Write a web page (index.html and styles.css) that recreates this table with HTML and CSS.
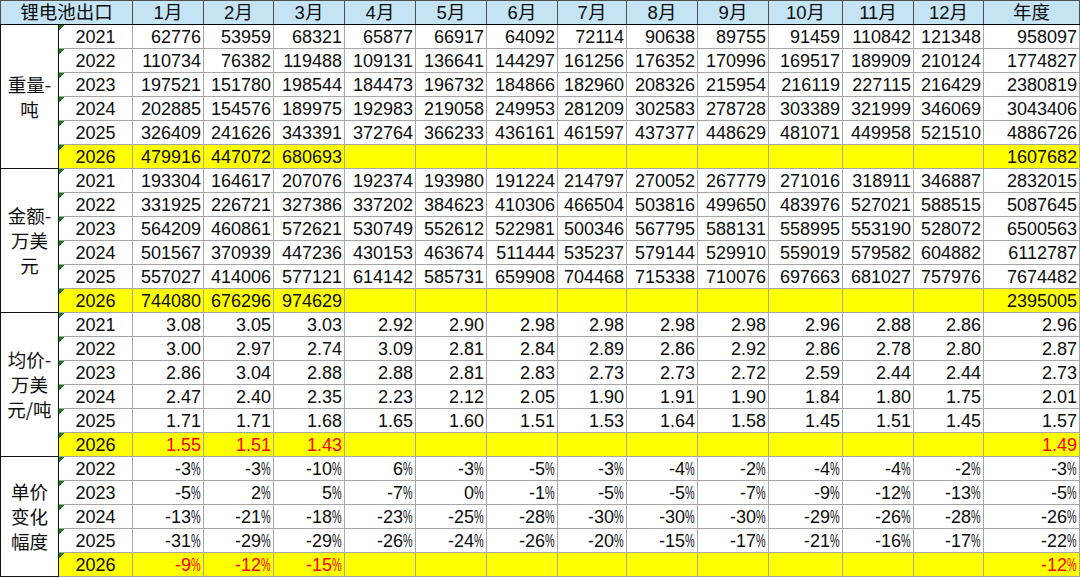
FILE: index.html
```html
<!DOCTYPE html>
<html lang="zh">
<head>
<meta charset="utf-8">
<link rel="stylesheet" href="styles.css">
</head>
<body>
<table class="sheet">
<colgroup>
<col class="c0"><col class="c1"><col class="m71"><col class="m70"><col class="m71"><col class="m71"><col class="m71"><col class="m71"><col class="m69"><col class="m71"><col class="m71"><col class="m74"><col class="m71"><col class="m70"><col class="cy">
</colgroup>
<thead>
<tr><th colspan="2">锂电池出口</th><th>1月</th><th>2月</th><th>3月</th><th>4月</th><th>5月</th><th>6月</th><th>7月</th><th>8月</th><th>9月</th><th>10月</th><th>11月</th><th>12月</th><th>年度</th></tr>
</thead>
<tbody>
<tr class="gs"><td class="cat" rowspan="6">重量-<br>吨</td><td class="yr">2021</td><td>62776</td><td>53959</td><td>68321</td><td>65877</td><td>66917</td><td>64092</td><td>72114</td><td>90638</td><td>89755</td><td>91459</td><td>110842</td><td>121348</td><td>958097</td></tr>
<tr><td class="yr">2022</td><td>110734</td><td>76382</td><td>119488</td><td>109131</td><td>136641</td><td>144297</td><td>161256</td><td>176352</td><td>170996</td><td>169517</td><td>189909</td><td>210124</td><td>1774827</td></tr>
<tr><td class="yr">2023</td><td>197521</td><td>151780</td><td>198544</td><td>184473</td><td>196732</td><td>184866</td><td>182960</td><td>208326</td><td>215954</td><td>216119</td><td>227115</td><td>216429</td><td>2380819</td></tr>
<tr><td class="yr">2024</td><td>202885</td><td>154576</td><td>189975</td><td>192983</td><td>219058</td><td>249953</td><td>281209</td><td>302583</td><td>278728</td><td>303389</td><td>321999</td><td>346069</td><td>3043406</td></tr>
<tr><td class="yr">2025</td><td>326409</td><td>241626</td><td>343391</td><td>372764</td><td>366233</td><td>436161</td><td>461597</td><td>437377</td><td>448629</td><td>481071</td><td>449958</td><td>521510</td><td>4886726</td></tr>
<tr class="hl"><td class="yr">2026</td><td>479916</td><td>447072</td><td>680693</td><td></td><td></td><td></td><td></td><td></td><td></td><td></td><td></td><td></td><td>1607682</td></tr>

<tr class="gs"><td class="cat" rowspan="6">金额-<br>万美<br>元</td><td class="yr">2021</td><td>193304</td><td>164617</td><td>207076</td><td>192374</td><td>193980</td><td>191224</td><td>214797</td><td>270052</td><td>267779</td><td>271016</td><td>318911</td><td>346887</td><td>2832015</td></tr>
<tr><td class="yr">2022</td><td>331925</td><td>226721</td><td>327386</td><td>337202</td><td>384623</td><td>410306</td><td>466504</td><td>503816</td><td>499650</td><td>483976</td><td>527021</td><td>588515</td><td>5087645</td></tr>
<tr><td class="yr">2023</td><td>564209</td><td>460861</td><td>572621</td><td>530749</td><td>552612</td><td>522981</td><td>500346</td><td>567795</td><td>588131</td><td>558995</td><td>553190</td><td>528072</td><td>6500563</td></tr>
<tr><td class="yr">2024</td><td>501567</td><td>370939</td><td>447236</td><td>430153</td><td>463674</td><td>511444</td><td>535237</td><td>579144</td><td>529910</td><td>559019</td><td>579582</td><td>604882</td><td>6112787</td></tr>
<tr><td class="yr">2025</td><td>557027</td><td>414006</td><td>577121</td><td>614142</td><td>585731</td><td>659908</td><td>704468</td><td>715338</td><td>710076</td><td>697663</td><td>681027</td><td>757976</td><td>7674482</td></tr>
<tr class="hl"><td class="yr">2026</td><td>744080</td><td>676296</td><td>974629</td><td></td><td></td><td></td><td></td><td></td><td></td><td></td><td></td><td></td><td>2395005</td></tr>

<tr class="gs"><td class="cat" rowspan="6">均价-<br>万美<br>元/吨</td><td class="yr">2021</td><td>3.08</td><td>3.05</td><td>3.03</td><td>2.92</td><td>2.90</td><td>2.98</td><td>2.98</td><td>2.98</td><td>2.98</td><td>2.96</td><td>2.88</td><td>2.86</td><td>2.96</td></tr>
<tr><td class="yr">2022</td><td>3.00</td><td>2.97</td><td>2.74</td><td>3.09</td><td>2.81</td><td>2.84</td><td>2.89</td><td>2.86</td><td>2.92</td><td>2.86</td><td>2.78</td><td>2.80</td><td>2.87</td></tr>
<tr><td class="yr">2023</td><td>2.86</td><td>3.04</td><td>2.88</td><td>2.88</td><td>2.81</td><td>2.83</td><td>2.73</td><td>2.73</td><td>2.72</td><td>2.59</td><td>2.44</td><td>2.44</td><td>2.73</td></tr>
<tr><td class="yr">2024</td><td>2.47</td><td>2.40</td><td>2.35</td><td>2.23</td><td>2.12</td><td>2.05</td><td>1.90</td><td>1.91</td><td>1.90</td><td>1.84</td><td>1.80</td><td>1.75</td><td>2.01</td></tr>
<tr><td class="yr">2025</td><td>1.71</td><td>1.71</td><td>1.68</td><td>1.65</td><td>1.60</td><td>1.51</td><td>1.53</td><td>1.64</td><td>1.58</td><td>1.45</td><td>1.51</td><td>1.45</td><td>1.57</td></tr>
<tr class="hl red"><td class="yr">2026</td><td>1.55</td><td>1.51</td><td>1.43</td><td></td><td></td><td></td><td></td><td></td><td></td><td></td><td></td><td></td><td>1.49</td></tr>

<tr class="gs"><td class="cat" rowspan="5">单价<br>变化<br>幅度</td><td class="yr">2022</td><td>-3<span class="pc">%</span></td><td>-3<span class="pc">%</span></td><td>-10<span class="pc">%</span></td><td>6<span class="pc">%</span></td><td>-3<span class="pc">%</span></td><td>-5<span class="pc">%</span></td><td>-3<span class="pc">%</span></td><td>-4<span class="pc">%</span></td><td>-2<span class="pc">%</span></td><td>-4<span class="pc">%</span></td><td>-4<span class="pc">%</span></td><td>-2<span class="pc">%</span></td><td>-3<span class="pc">%</span></td></tr>
<tr><td class="yr">2023</td><td>-5<span class="pc">%</span></td><td>2<span class="pc">%</span></td><td>5<span class="pc">%</span></td><td>-7<span class="pc">%</span></td><td>0<span class="pc">%</span></td><td>-1<span class="pc">%</span></td><td>-5<span class="pc">%</span></td><td>-5<span class="pc">%</span></td><td>-7<span class="pc">%</span></td><td>-9<span class="pc">%</span></td><td>-12<span class="pc">%</span></td><td>-13<span class="pc">%</span></td><td>-5<span class="pc">%</span></td></tr>
<tr><td class="yr">2024</td><td>-13<span class="pc">%</span></td><td>-21<span class="pc">%</span></td><td>-18<span class="pc">%</span></td><td>-23<span class="pc">%</span></td><td>-25<span class="pc">%</span></td><td>-28<span class="pc">%</span></td><td>-30<span class="pc">%</span></td><td>-30<span class="pc">%</span></td><td>-30<span class="pc">%</span></td><td>-29<span class="pc">%</span></td><td>-26<span class="pc">%</span></td><td>-28<span class="pc">%</span></td><td>-26<span class="pc">%</span></td></tr>
<tr><td class="yr">2025</td><td>-31<span class="pc">%</span></td><td>-29<span class="pc">%</span></td><td>-29<span class="pc">%</span></td><td>-26<span class="pc">%</span></td><td>-24<span class="pc">%</span></td><td>-26<span class="pc">%</span></td><td>-20<span class="pc">%</span></td><td>-15<span class="pc">%</span></td><td>-17<span class="pc">%</span></td><td>-21<span class="pc">%</span></td><td>-16<span class="pc">%</span></td><td>-17<span class="pc">%</span></td><td>-22<span class="pc">%</span></td></tr>
<tr class="hl red"><td class="yr">2026</td><td>-9<span class="pc">%</span></td><td>-12<span class="pc">%</span></td><td>-15<span class="pc">%</span></td><td></td><td></td><td></td><td></td><td></td><td></td><td></td><td></td><td></td><td>-12<span class="pc">%</span></td></tr>
</tbody>
</table>
</body>
</html>
```
FILE: styles.css
```css
html, body {
  margin: 0;
  padding: 0;
  background: #ffffff;
}

.sheet {
  border-collapse: collapse;
  table-layout: fixed;
  width: 1079px;
  font-family: "Liberation Sans", "Noto Sans CJK SC", sans-serif;
  font-size: 18px;
  color: #0d0d0d;
  border-right: 1px solid #444;
  border-bottom: 1px solid #444;
}

.c0 { width: 58px; }
.c1 { width: 74px; }
.m69 { width: 69px; }
.m70 { width: 70px; }
.m71 { width: 71px; }
.m74 { width: 74px; }
.cy { width: 96px; }

.sheet th,
.sheet td {
  height: 22px;
  padding: 1px 2px 0 0;
  line-height: 22px;
  white-space: nowrap;
  overflow: hidden;
  border: 1px solid #a6a6a6;
  text-align: right;
}

.sheet th {
  height: 23px;
  background: #c4e4f4;
  font-weight: normal;
  text-align: center;
  padding: 0;
  border-color: #505050;
  border-bottom: 1px solid #000;
  font-size: 18.5px;
}

.sheet tr.gs td {
  border-top: 1.5px solid #111;
}

.sheet td.cat {
  text-align: center;
  padding: 0;
  line-height: 25px;
  border: 1px solid #111;
  font-family: "Noto Sans CJK SC", sans-serif;
  font-size: 18.5px;
  background: #fff;
}

.sheet tr.gs td.cat {
  border-top: 1.5px solid #111;
}

.sheet td.yr {
  text-align: center;
  padding-right: 0;
  background-image: linear-gradient(135deg, #1e7b1e 0 4px, transparent 4px);
  background-repeat: no-repeat;
  background-size: 8px 8px;
  background-position: 0 0;
}

.sheet tr.hl td {
  background-color: #ffff00;
}

.sheet tr.red td {
  color: #ff0000;
}

.sheet tr.red td.yr {
  color: #0d0d0d;
}

.pc {
  display: inline-block;
  width: 10px;
  text-align: left;
  transform: scaleX(0.6);
  transform-origin: left center;
}
```
